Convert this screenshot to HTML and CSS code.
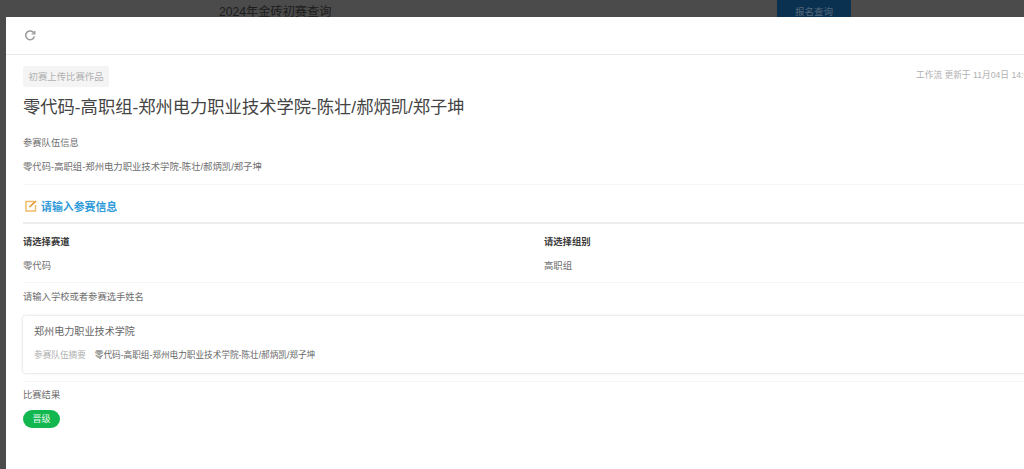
FILE: index.html
```html
<!DOCTYPE html>
<html lang="zh-CN">
<head>
<meta charset="utf-8">
<title>2024年金砖初赛查询</title>
<link rel="stylesheet" href="styles.css">
</head>
<body>
<div class="backdrop">
  <span class="bg-title">2024年金砖初赛查询</span>
  <span class="bg-button">报名查询</span>
</div>
<div class="modal">
  <header class="toolbar">
    <svg class="refresh" viewBox="0 0 12 12" width="12" height="12" fill="none" stroke="#9a9a9a" stroke-width="1.5" aria-hidden="true">
      <path d="M10 3.2A4.4 4.4 0 1 0 10.4 6.4"/>
      <path d="M10.8 0.9V3.9H7.6" stroke-width="1.3"/>
    </svg>
  </header>
  <main class="content">
    <div class="meta-row">
      <span class="tag">初赛上传比赛作品</span>
      <span class="updated">工作流 更新于 11月04日 14:06</span>
    </div>
    <h1 class="title">零代码-高职组-郑州电力职业技术学院-陈壮/郝炳凯/郑子坤</h1>
    <section class="field team-field">
      <div class="label">参赛队伍信息</div>
      <div class="value">零代码-高职组-郑州电力职业技术学院-陈壮/郝炳凯/郑子坤</div>
    </section>
    <div class="section-head">
      <svg class="edit-icon" viewBox="0 0 12 12" width="12" height="12" fill="none" aria-hidden="true">
        <path d="M9 1.5H1V11H10.5V5" stroke="#f0bb66" stroke-width="1.4"/>
        <path d="M4.5 7 11 1" stroke="#e2952b" stroke-width="1.7"/>
      </svg>
      <span>请输入参赛信息</span>
    </div>
    <section class="two-col">
      <div>
        <div class="label strong">请选择赛道</div>
        <div class="value">零代码</div>
      </div>
      <div>
        <div class="label strong">请选择组别</div>
        <div class="value">高职组</div>
      </div>
    </section>
    <section class="school-field">
      <div class="label">请输入学校或者参赛选手姓名</div>
      <div class="card">
        <div class="card-title">郑州电力职业技术学院</div>
        <div class="card-row">
          <span class="card-key">参赛队伍摘要</span>
          <span class="card-value">零代码-高职组-郑州电力职业技术学院-陈壮/郝炳凯/郑子坤</span>
        </div>
      </div>
    </section>
    <section class="result-field">
      <div class="label">比赛结果</div>
      <span class="pill">晋级</span>
    </section>
  </main>
</div>
</body>
</html>
```
FILE: styles.css
```css
* { box-sizing: border-box; }
html, body { margin: 0; height: 469px; overflow: hidden; }
body {
  width: 1024px;
  background: #4b4b4b;
  font-family: "Liberation Sans", "Noto Sans CJK SC", sans-serif;
  color: #333;
}
.backdrop {
  height: 17px;
  overflow: hidden;
  display: flex;
  align-items: flex-start;
  padding-left: 219px;
}
.bg-title {
  font-size: 12.2px;
  line-height: 24px;
  color: #1c1c1c;
  width: 558px;
}
.bg-button {
  width: 74px;
  height: 24px;
  background: #0a3150;
  color: #55697a;
  font-size: 9.5px;
  line-height: 24px;
  text-align: center;
}
.modal {
  margin-left: 6px;
  width: 1060px;
  height: 452px;
  background: #fff;
}
.toolbar {
  height: 38px;
  border-bottom: 1px solid #e8e8e8;
  padding: 13px 0 0 18px;
}
.refresh { display: block; }
.content { padding: 11px 0 0 17px; }
.meta-row {
  display: flex;
  justify-content: space-between;
  align-items: flex-start;
  height: 21px;
}
.tag {
  background: #f4f4f4;
  color: #b0b0b0;
  font-size: 9.4px;
  line-height: 21px;
  height: 21px;
  padding: 0 5.5px;
  border-radius: 2px;
}
.updated {
  color: #b0b0b0;
  font-size: 8.7px;
  line-height: 14px;
  margin-top: 2px;
  width: 150px;
  white-space: nowrap;
}
.title {
  margin: 8px 0 0;
  font-size: 17.3px;
  line-height: 24px;
  font-weight: 400;
  color: #444;
}
.label {
  font-size: 9.3px;
  line-height: 14px;
  color: #6e6e6e;
}
.label.strong { color: #3a3a3a; font-weight: 700; }
.value {
  font-size: 9.35px;
  line-height: 14px;
  color: #6e6e6e;
  margin-top: 10px;
}
.team-field {
  margin-top: 17px;
  height: 49px;
  border-bottom: 1px solid #f6f6f6;
}
.section-head {
  height: 39px;
  border-bottom: 2px solid #ededed;
  display: flex;
  align-items: center;
  gap: 4px;
  padding: 5px 0 0 2px;
  color: #2f9ad8;
  font-size: 10.9px;
  font-weight: 700;
}
.edit-icon { display: block; }
.two-col {
  display: grid;
  grid-template-columns: 521px 1fr;
  height: 59px;
  padding-top: 11px;
  border-bottom: 1px solid #f6f6f6;
}
.school-field { padding-top: 7px; height: 99px; border-bottom: 1px solid #f6f6f6; }
.card {
  margin-top: 12px;
  height: 57px;
  padding: 9px 11px;
  background: #fff;
  border-radius: 3px;
  box-shadow: 0 0 3px rgba(0, 0, 0, 0.2);
}
.card-title {
  font-size: 10.1px;
  line-height: 14px;
  color: #666;
}
.card-row {
  display: flex;
  gap: 9px;
  margin-top: 9px;
  font-size: 8.65px;
  line-height: 14px;
}
.card-key { color: #b0b0b0; }
.card-value { color: #666; }
.result-field { padding-top: 6px; }
.pill {
  display: block;
  width: 37px;
  height: 18px;
  margin-top: 8px;
  border-radius: 9px;
  background: #12b84f;
  color: #e9f9ef;
  font-size: 9px;
  line-height: 18px;
  text-align: center;
}
```
